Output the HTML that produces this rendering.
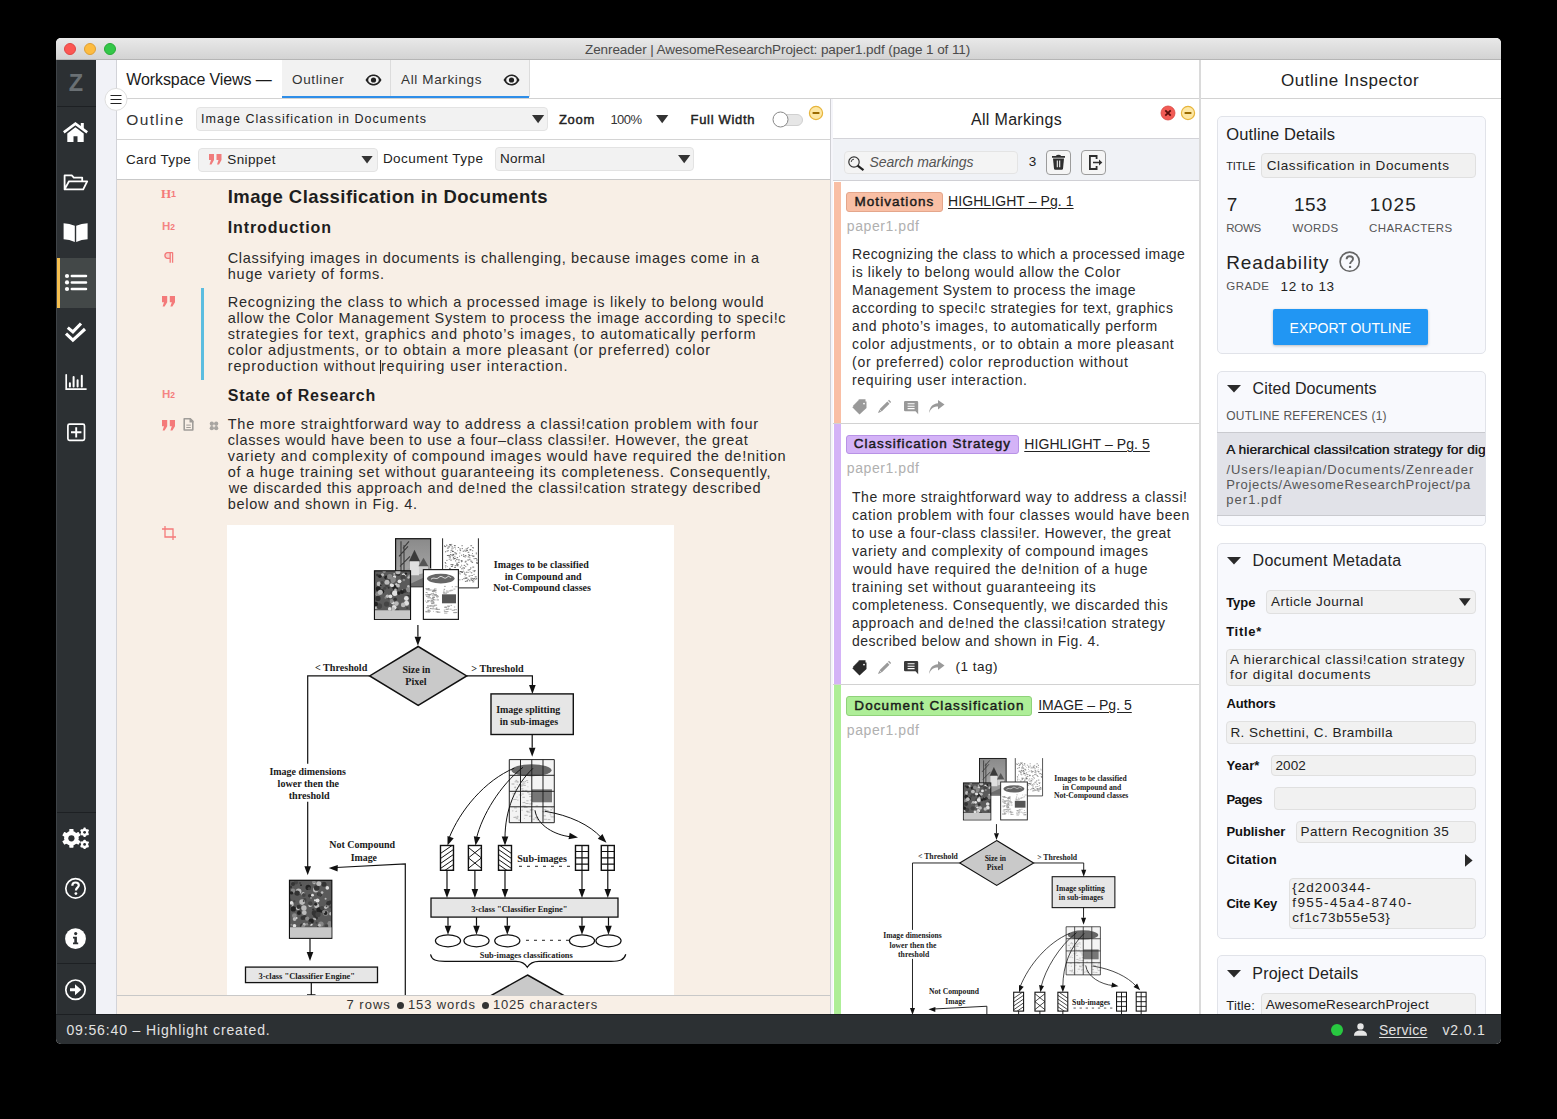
<!DOCTYPE html>
<html><head><meta charset="utf-8">
<style>
*{box-sizing:border-box;margin:0;padding:0}
html,body{width:1557px;height:1119px;background:#000;overflow:hidden;font-family:"Liberation Sans",sans-serif;color:#222}
.a{position:absolute;white-space:nowrap}
.b{position:absolute}
#win{position:absolute;left:56px;top:38px;width:1445px;height:1006px;background:#fff;border-radius:5px;overflow:hidden}
#pg{position:absolute;left:-56px;top:-38px;width:1557px;height:1119px}
svg{position:absolute;overflow:visible}
</style></head><body>
<div id="win"><div id="pg">
<div class="b" style="left:56px;top:38px;width:1445px;height:22px;background:linear-gradient(#e9e9e9,#d3d3d3);border-bottom:1px solid #b5b5b5;"></div>
<div class="b" style="left:64px;top:43px;width:12px;height:12px;background:#fc5753;border-radius:50%;border:1px solid #df4744;"></div>
<div class="b" style="left:84px;top:43px;width:12px;height:12px;background:#fdbc40;border-radius:50%;border:1px solid #de9f34;"></div>
<div class="b" style="left:104px;top:43px;width:12px;height:12px;background:#33c748;border-radius:50%;border:1px solid #27aa35;"></div>
<div class="a" style="left:585.00px;top:42.77px;font-size:13.5px;line-height:13.5px;letter-spacing:-0.083px;color:#4a4a4a;">Zenreader | AwesomeResearchProject: paper1.pdf (page 1 of 11)</div>
<div class="b" style="left:56px;top:60px;width:40px;height:954px;background:#2c3033;"></div>
<div class="b" style="left:56px;top:258px;width:40px;height:50px;background:#434848;"></div>
<div class="b" style="left:56px;top:258px;width:4px;height:50px;background:#f6bf4f;"></div>
<div class="b" style="left:56px;top:106px;width:40px;height:1px;background:#1d2023;"></div>
<div class="b" style="left:56px;top:812px;width:40px;height:1px;background:#1d2023;"></div>
<div class="b" style="left:56px;top:963px;width:40px;height:1px;background:#1d2023;"></div>
<div class="b" style="left:96px;top:60px;width:21px;height:954px;background:#f1f2f7;"></div>
<div class="b" style="left:116px;top:60px;width:1px;height:954px;background:#d2d3d8;"></div>
<div class="a" style="left:68.70px;top:72.30px;font-size:23.5px;line-height:23.5px;font-weight:bold;color:#6a7074;">Z</div>
<div class="b" style="left:56px;top:60px;width:1px;height:954px;background:#3f4448;"></div>
<svg style="left:0;top:0" width="1" height="1"><path d="M63.8 132.4L75.4 123.6L87.2 132.4" stroke="#ffffff" stroke-width="2.6" fill="none" stroke-linejoin="miter"/><path d="M80.8 123H83.8V130.5L80.8 128.3Z" fill="#ffffff"/><path d="M67.3 133.4L75.4 127.3L83.7 133.4V141.9H77.5V136.3H73.5V141.9H67.3Z" fill="#ffffff"/></svg>
<svg style="left:0;top:0" width="1" height="1"><path d="M64.6 189.4V175.4H71.8L73.8 177.6H82.2V181.2M64.6 189.4L69 181.3H87.2L83.2 189.4Z" stroke="#ffffff" stroke-width="1.8" fill="none" stroke-linejoin="round"/></svg>
<svg style="left:0;top:0" width="1" height="1"><path d="M63.6 223.3Q69.5 223.6 74.8 225.7V242Q69.5 239.6 63.6 239.3Z" fill="#ffffff"/><path d="M76.2 225.7Q81.5 223.6 87.6 223.3V239.3Q81.5 239.6 76.2 242Z" fill="#ffffff"/></svg>
<svg style="left:0;top:0" width="1" height="1"><g fill="#ffffff"><circle cx="67" cy="276" r="2.1"/><circle cx="67" cy="282.4" r="2.1"/><circle cx="67" cy="289" r="2.1"/></g><path d="M71.8 276H86M71.8 282.4H86M71.8 289H86" stroke="#ffffff" stroke-width="2.5" stroke-linecap="round"/></svg>
<svg style="left:0;top:0" width="1" height="1"><path d="M67.8 327.6L72.9 331.9L81 323.5M66 333.6L72.9 340.2L85 329" stroke="#ffffff" stroke-width="3.1" fill="none" stroke-linejoin="miter"/></svg>
<svg style="left:0;top:0" width="1" height="1"><path d="M66.2 374.8V389.1H86" stroke="#ffffff" stroke-width="1.7" fill="none" stroke-linecap="round"/><path d="M69.9 383.3V386.4M73.6 377V386.4M77.6 380.3V386.4M81.8 375.8V386.4" stroke="#ffffff" stroke-width="2" stroke-linecap="round"/></svg>
<svg style="left:0;top:0" width="1" height="1"><rect x="67.9" y="424.2" width="16.6" height="16.2" rx="1.6" stroke="#ffffff" stroke-width="1.7" fill="none"/><path d="M71 432.3H81.4M76.2 427.2V437.5" stroke="#ffffff" stroke-width="1.9"/></svg>
<svg style="left:0;top:0" width="1" height="1"><g fill="#ffffff"><rect x="69.30" y="828.90" width="4.2" height="9.4" transform="rotate(0.0 71.4 838.3)" rx="0.6"/><rect x="69.30" y="828.90" width="4.2" height="9.4" transform="rotate(60.0 71.4 838.3)" rx="0.6"/><rect x="69.30" y="828.90" width="4.2" height="9.4" transform="rotate(120.0 71.4 838.3)" rx="0.6"/><rect x="69.30" y="828.90" width="4.2" height="9.4" transform="rotate(180.0 71.4 838.3)" rx="0.6"/><rect x="69.30" y="828.90" width="4.2" height="9.4" transform="rotate(240.0 71.4 838.3)" rx="0.6"/><rect x="69.30" y="828.90" width="4.2" height="9.4" transform="rotate(300.0 71.4 838.3)" rx="0.6"/><circle cx="71.4" cy="838.3" r="7.3"/></g><circle cx="71.4" cy="838.3" r="3.1" fill="#2c3033"/><g fill="#ffffff"><rect x="83.50" y="827.60" width="2.2" height="4.7" transform="rotate(0.0 84.6 832.3)" rx="0.6"/><rect x="83.50" y="827.60" width="2.2" height="4.7" transform="rotate(60.0 84.6 832.3)" rx="0.6"/><rect x="83.50" y="827.60" width="2.2" height="4.7" transform="rotate(120.0 84.6 832.3)" rx="0.6"/><rect x="83.50" y="827.60" width="2.2" height="4.7" transform="rotate(180.0 84.6 832.3)" rx="0.6"/><rect x="83.50" y="827.60" width="2.2" height="4.7" transform="rotate(240.0 84.6 832.3)" rx="0.6"/><rect x="83.50" y="827.60" width="2.2" height="4.7" transform="rotate(300.0 84.6 832.3)" rx="0.6"/><circle cx="84.6" cy="832.3" r="3.6"/></g><circle cx="84.6" cy="832.3" r="1.4" fill="#2c3033"/><g fill="#ffffff"><rect x="83.50" y="839.70" width="2.2" height="4.7" transform="rotate(0.0 84.6 844.4)" rx="0.6"/><rect x="83.50" y="839.70" width="2.2" height="4.7" transform="rotate(60.0 84.6 844.4)" rx="0.6"/><rect x="83.50" y="839.70" width="2.2" height="4.7" transform="rotate(120.0 84.6 844.4)" rx="0.6"/><rect x="83.50" y="839.70" width="2.2" height="4.7" transform="rotate(180.0 84.6 844.4)" rx="0.6"/><rect x="83.50" y="839.70" width="2.2" height="4.7" transform="rotate(240.0 84.6 844.4)" rx="0.6"/><rect x="83.50" y="839.70" width="2.2" height="4.7" transform="rotate(300.0 84.6 844.4)" rx="0.6"/><circle cx="84.6" cy="844.4" r="3.6"/></g><circle cx="84.6" cy="844.4" r="1.4" fill="#2c3033"/></svg>
<svg style="left:0;top:0" width="1" height="1"><circle cx="75.5" cy="888.4" r="9.7" stroke="#ffffff" stroke-width="1.7" fill="none"/><path d="M72.3 885.7C72.3 883.5 73.7 882.5 75.6 882.5C77.5 882.5 78.8 883.6 78.8 885.3C78.8 887.5 76.2 887.7 76 890V890.6" stroke="#ffffff" stroke-width="2.2" fill="none"/><circle cx="75.9" cy="893.6" r="1.4" fill="#ffffff"/></svg>
<svg style="left:0;top:0" width="1" height="1"><circle cx="75.5" cy="938.7" r="10.4" fill="#ffffff"/><circle cx="75.7" cy="933.6" r="1.6" fill="#2c3033"/><path d="M73 936.8H76.9V942.6H78.2V944.3H73V942.6H74.3V938.5H73Z" fill="#2c3033"/></svg>
<svg style="left:0;top:0" width="1" height="1"><circle cx="75.5" cy="989.7" r="9.7" stroke="#ffffff" stroke-width="1.7" fill="none"/><path d="M70 988.2H75V984.2L81.2 989.7L75 995.2V991.2H70Z" fill="#ffffff"/></svg>
<div class="b" style="left:282px;top:60px;width:108px;height:37px;background:#f2f2f2;"></div>
<div class="b" style="left:390px;top:60px;width:139px;height:37px;background:#f2f2f2;"></div>
<div class="b" style="left:390px;top:60px;width:1px;height:37px;background:#dcdcdc;"></div>
<div class="b" style="left:529px;top:60px;width:1px;height:37px;background:#dcdcdc;"></div>
<div class="b" style="left:282px;top:96px;width:247px;height:2px;background:#2e8ee8;"></div>
<div class="b" style="left:117px;top:98px;width:1384px;height:1px;background:#d2d2d2;"></div>
<div class="a" style="left:126.30px;top:71.95px;font-size:16px;line-height:16px;letter-spacing:-0.094px;color:#1a1a1a;">Workspace Views —</div>
<div class="a" style="left:292.10px;top:72.77px;font-size:13.5px;line-height:13.5px;letter-spacing:0.614px;color:#333;">Outliner</div>
<div class="a" style="left:401.00px;top:72.77px;font-size:13.5px;line-height:13.5px;letter-spacing:0.636px;color:#333;">All Markings</div>
<svg style="left:364.5px;top:73px" width="17" height="14" viewBox="0 0 17 14"><path d="M0.5 7 C3 2.5 6 1.5 8.5 1.5 C11 1.5 14 2.5 16.5 7 C14 11.5 11 12.5 8.5 12.5 C6 12.5 3 11.5 0.5 7Z" fill="#222"/><ellipse cx="8.5" cy="7" rx="5.3" ry="3.9" fill="#f2f2f2"/><circle cx="8.5" cy="7" r="2.6" fill="#222"/></svg>
<svg style="left:502.5px;top:73px" width="17" height="14" viewBox="0 0 17 14"><path d="M0.5 7 C3 2.5 6 1.5 8.5 1.5 C11 1.5 14 2.5 16.5 7 C14 11.5 11 12.5 8.5 12.5 C6 12.5 3 11.5 0.5 7Z" fill="#222"/><ellipse cx="8.5" cy="7" rx="5.3" ry="3.9" fill="#f2f2f2"/><circle cx="8.5" cy="7" r="2.6" fill="#222"/></svg>
<svg style="left:104px;top:87px" width="25" height="25" viewBox="0 0 25 25"><circle cx="12" cy="12.4" r="11" fill="#fff" stroke="#dedede" stroke-width="1"/><path d="M6.5 8.5h11M6.5 12.5h11M6.5 16.5h11" stroke="#222" stroke-width="1.1"/></svg>
<div class="b" style="left:117px;top:139px;width:713px;height:1px;background:#d4d4d4;"></div>
<div class="b" style="left:117px;top:179px;width:713px;height:1px;background:#c9c9c9;"></div>
<div class="a" style="left:126.30px;top:111.88px;font-size:15.5px;line-height:15.5px;letter-spacing:1.333px;color:#333;">Outline</div>
<div class="b" style="left:196px;top:107px;width:352px;height:24px;background:#f2f2f2;border:1px solid #e3e3e3;border-radius:4px;"></div>
<div class="a" style="left:201.00px;top:113.12px;font-size:12.5px;line-height:12.5px;letter-spacing:1.041px;color:#222;">Image Classification in Documents</div>
<svg style="left:532px;top:115px" width="12.2" height="8.2" viewBox="0 0 12 8"><path d="M0 0H12L6 8Z" fill="#333"/></svg>
<div class="a" style="left:559.00px;top:112.79px;font-size:13px;line-height:13px;letter-spacing:0.667px;color:#222;-webkit-text-stroke:.45px #222;">Zoom</div>
<div class="a" style="left:610.40px;top:112.79px;font-size:13px;line-height:13px;letter-spacing:-0.500px;color:#333;">100%</div>
<svg style="left:655.6px;top:115px" width="12.4" height="8.2" viewBox="0 0 12 8"><path d="M0 0H12L6 8Z" fill="#333"/></svg>
<div class="a" style="left:690.60px;top:112.79px;font-size:13px;line-height:13px;letter-spacing:0.667px;color:#222;-webkit-text-stroke:.45px #222;">Full Width</div>
<div class="b" style="left:774px;top:114px;width:29px;height:12px;background:#e6e6e6;border-radius:6px;border:1px solid #d0d0d0;"></div>
<svg style="left:772px;top:111px" width="17" height="17" viewBox="0 0 17 17"><circle cx="8.5" cy="8.5" r="7.5" fill="#fff" stroke="#888" stroke-width="1"/></svg>
<svg style="left:808px;top:105px" width="16" height="16" viewBox="0 0 16 16"><circle cx="8" cy="8" r="6.6" fill="#fde7a4" stroke="#e7b53c" stroke-width="1.2"/><path d="M4.6 8h6.8" stroke="#9a6a00" stroke-width="1.8"/></svg>
<div class="a" style="left:126.00px;top:152.57px;font-size:13.5px;line-height:13.5px;letter-spacing:0.338px;color:#222;">Card Type</div>
<div class="b" style="left:198px;top:147.5px;width:179.5px;height:24px;background:#f2f2f2;border:1px solid #e3e3e3;border-radius:4px;"></div>
<svg style="left:208.6px;top:154px" width="13" height="10.5" viewBox="0 0 13 10.5"><path d="M0 0h5v6l-2.5 4.5h-2l1.5-4.5h-2z M7.5 0h5v6l-2.5 4.5h-2l1.5-4.5h-2z" fill="#f07c7c"/></svg>
<div class="a" style="left:227.30px;top:152.57px;font-size:13.5px;line-height:13.5px;letter-spacing:0.383px;color:#222;">Snippet</div>
<svg style="left:360.6px;top:155.5px" width="12.1" height="7.5" viewBox="0 0 12 8"><path d="M0 0H12L6 8Z" fill="#333"/></svg>
<div class="a" style="left:382.90px;top:152.37px;font-size:13.5px;line-height:13.5px;letter-spacing:0.475px;color:#222;">Document Type</div>
<div class="b" style="left:495px;top:147.3px;width:199.3px;height:24.2px;background:#f2f2f2;border:1px solid #e3e3e3;border-radius:4px;"></div>
<div class="a" style="left:500.00px;top:152.37px;font-size:13.5px;line-height:13.5px;letter-spacing:0.280px;color:#222;">Normal</div>
<svg style="left:677.8px;top:155px" width="12.4" height="8.2" viewBox="0 0 12 8"><path d="M0 0H12L6 8Z" fill="#333"/></svg>
<div class="b" style="left:117px;top:180px;width:712.5px;height:815px;background:#f8efe6;"></div>
<div class="b" style="left:117px;top:995px;width:712.5px;height:1px;background:#c8c8c8;"></div>
<div class="b" style="left:117px;top:996px;width:712.5px;height:18px;background:#f8efe6;"></div>
<div class="b" style="left:829.5px;top:99px;width:1.5px;height:915px;background:#cfcfd4;"></div>
<div class="b" style="left:831px;top:99px;width:2px;height:915px;background:#f5f5fa;"></div>
<div class="a" style="left:161.00px;top:187.01px;font-size:13px;line-height:13px;font-family:'Liberation Serif',serif;font-weight:bold;color:#f47a7a;">H</div>
<div class="a" style="left:171.00px;top:190.28px;font-size:9px;line-height:9px;font-weight:bold;color:#f47a7a;">1</div>
<div class="a" style="left:162.00px;top:220.96px;font-size:11.5px;line-height:11.5px;font-weight:bold;color:#f47a7a;opacity:.9;">H</div>
<div class="a" style="left:170.30px;top:222.80px;font-size:8.5px;line-height:8.5px;font-weight:bold;color:#f47a7a;">2</div>
<svg style="left:163.4px;top:252.2px" width="10.2" height="10.8" viewBox="0 0 10.2 10.8"><path d="M7.2 0.6V10.8M9.6 0.6V10.8M9.8 0.6H4.2A3 3 0 0 0 4.2 6.4H7.2" stroke="#f47a7a" stroke-width="1.3" fill="none"/><path d="M4.2 0.6A2.9 2.9 0 0 0 4.2 6.4H7.2V0.6Z" fill="#f47a7a" opacity=".25"/></svg>
<svg style="left:162.2px;top:296.4px" width="13" height="10.5" viewBox="0 0 13 10.5"><path d="M0 0h5.2v6.2l-2.6 4.3h-2l1.4-4.3h-2z M7.8 0h5.2v6.2l-2.6 4.3h-2l1.4-4.3h-2z" fill="#f47a7a"/></svg>
<div class="b" style="left:201px;top:288.2px;width:3px;height:91.4px;background:#5bbde0;"></div>
<div class="a" style="left:227.70px;top:187.84px;font-size:18.5px;line-height:18.5px;letter-spacing:0.425px;font-weight:bold;color:#1e1e1e;">Image Classification in Documents</div>
<div class="a" style="left:227.70px;top:220.35px;font-size:16px;line-height:16px;letter-spacing:0.909px;font-weight:bold;color:#1e1e1e;">Introduction</div>
<div class="a" style="left:227.70px;top:250.82px;font-size:14.5px;line-height:14.5px;letter-spacing:0.673px;color:#2a2a2a;">Classifying images in documents is challenging, because images come in a</div>
<div class="a" style="left:227.70px;top:266.82px;font-size:14.5px;line-height:14.5px;letter-spacing:0.810px;color:#2a2a2a;">huge variety of forms.</div>
<div class="a" style="left:227.70px;top:295.02px;font-size:14.5px;line-height:14.5px;letter-spacing:0.748px;color:#2a2a2a;">Recognizing the class to which a processed image is likely to belong would</div>
<div class="a" style="left:227.70px;top:311.02px;font-size:14.5px;line-height:14.5px;letter-spacing:0.678px;color:#2a2a2a;">allow the Color Management System to process the image according to speci!c</div>
<div class="a" style="left:227.70px;top:327.02px;font-size:14.5px;line-height:14.5px;letter-spacing:0.844px;color:#2a2a2a;">strategies for text, graphics and photo’s images, to automatically perform</div>
<div class="a" style="left:227.70px;top:343.02px;font-size:14.5px;line-height:14.5px;letter-spacing:0.825px;color:#2a2a2a;">color adjustments, or to obtain a more pleasant (or preferred) color</div>
<div class="a" style="left:227.70px;top:359.02px;font-size:14.5px;line-height:14.5px;letter-spacing:0.885px;color:#2a2a2a;">reproduction without requiring user interaction.</div>
<div class="b" style="left:380px;top:360px;width:1px;height:14px;background:#222;"></div>
<div class="a" style="left:162.00px;top:388.96px;font-size:11.5px;line-height:11.5px;font-weight:bold;color:#f47a7a;opacity:.9;">H</div>
<div class="a" style="left:170.30px;top:390.80px;font-size:8.5px;line-height:8.5px;font-weight:bold;color:#f47a7a;">2</div>
<div class="a" style="left:227.70px;top:387.75px;font-size:16px;line-height:16px;letter-spacing:0.776px;font-weight:bold;color:#1e1e1e;">State of Research</div>
<svg style="left:162.2px;top:419.5px" width="13" height="10.5" viewBox="0 0 13 10.5"><path d="M0 0h5.2v6.2l-2.6 4.3h-2l1.4-4.3h-2z M7.8 0h5.2v6.2l-2.6 4.3h-2l1.4-4.3h-2z" fill="#f47a7a"/></svg>
<svg style="left:0;top:0" width="1" height="1"><path d="M184.2 418.7H190.2L192.8 421.4V430H184.2Z" fill="none" stroke="#a09d99" stroke-width="1.6" stroke-linejoin="round"/><path d="M189.5 418.2H190.6L193.4 421V422.5H189.5Z" fill="#a09d99"/><path d="M186.3 425.1H190.8M186.3 427.5H190.8" stroke="#a09d99" stroke-width="1"/></svg>
<svg style="left:0;top:0" width="1" height="1"><path d="M211.8 423.7H216.2V428.2H211.8Z" fill="none" stroke="#c0bcb8" stroke-width="1.3"/><g fill="#a8a5a1"><circle cx="211.8" cy="423.7" r="2.1"/><circle cx="216.2" cy="423.7" r="2.1"/><circle cx="211.8" cy="428.2" r="2.1"/><circle cx="216.2" cy="428.2" r="2.1"/></g></svg>
<div class="a" style="left:227.70px;top:417.42px;font-size:14.5px;line-height:14.5px;letter-spacing:0.786px;color:#2a2a2a;">The more straightforward way to address a classi!cation problem with four</div>
<div class="a" style="left:227.70px;top:433.42px;font-size:14.5px;line-height:14.5px;letter-spacing:0.640px;color:#2a2a2a;">classes would have been to use a four–class classi!er. However, the great</div>
<div class="a" style="left:227.70px;top:449.42px;font-size:14.5px;line-height:14.5px;letter-spacing:0.786px;color:#2a2a2a;">variety and complexity of compound images would have required the de!nition</div>
<div class="a" style="left:227.70px;top:465.42px;font-size:14.5px;line-height:14.5px;letter-spacing:0.772px;color:#2a2a2a;">of a huge training set without guaranteeing its completeness. Consequently,</div>
<div class="a" style="left:228.70px;top:481.42px;font-size:14.5px;line-height:14.5px;letter-spacing:0.673px;color:#2a2a2a;">we discarded this approach and de!ned the classi!cation strategy described</div>
<div class="a" style="left:227.70px;top:497.42px;font-size:14.5px;line-height:14.5px;letter-spacing:0.708px;color:#2a2a2a;">below and shown in Fig. 4.</div>
<svg style="left:161.5px;top:525.5px" width="14" height="14" viewBox="0 0 14 14"><path d="M3 0V11H14M0 3H11V14" fill="none" stroke="#f47a7a" stroke-width="1.3"/></svg>
<div class="a" style="left:346.50px;top:998.49px;font-size:13px;line-height:13px;letter-spacing:1.000px;color:#333;">7 rows</div>
<div class="b" style="left:396.5px;top:1001.5px;width:7px;height:7px;background:#333;border-radius:50%;"></div>
<div class="a" style="left:408.00px;top:998.49px;font-size:13px;line-height:13px;letter-spacing:0.875px;color:#333;">153 words</div>
<div class="b" style="left:481.5px;top:1001.5px;width:7px;height:7px;background:#333;border-radius:50%;"></div>
<div class="a" style="left:493.00px;top:998.49px;font-size:13px;line-height:13px;letter-spacing:0.786px;color:#333;">1025 characters</div>
<svg style="left:0;top:0;overflow:hidden" width="0" height="0"><defs><g id="fig"><rect x="227" y="524.7" width="447.2" height="600" fill="#fff"/><defs><linearGradient id="sky" x1="0" y1="0" x2="0" y2="1"><stop offset="0" stop-color="#8a8a8a"/><stop offset="1" stop-color="#b0b0b0"/></linearGradient></defs><rect x="395.6" y="538.4" width="35" height="48" fill="url(#sky)" stroke="#111" stroke-width="1.2"/><path d="M396 586V574L413 566L431 568V586Z" fill="#999"/><path d="M405 586L431 574V586Z" fill="#6d6d6d"/><path d="M410 575V560L414.5 551L419 560V575Z" fill="#e0e0e0"/><path d="M409 561L414.5 549.5L420 561Z" fill="#3a3a3a"/><path d="M419 574V565L423.5 559L428 565V572Z" fill="#cfcfcf"/><path d="M418.5 566L423.5 557.5L428.5 566Z" fill="#555"/><path d="M401 586V541M404 586V545M399 556L408 546M400 566L410 556M403 548L409 541" stroke="#3a3a3a" stroke-width="1.1" fill="none"/><rect x="442.3" y="538.4" width="36.4" height="49" fill="#fff"/><path d="M442.6 538V587.6H478.4V538" stroke="#222" stroke-width="1" fill="none"/><path d="M451.9 564.7h1.1M463.9 567.8h0.6M444.4 575.8h0.9M451.7 581.8h1.2M471.6 562.1h1.5M449.0 568.1h1.8M461.3 572.2h1.5M446.1 572.8h1.4M453.9 545.2h1.8M459.6 571.3h1.8M467.6 579.0h1.1M470.4 560.9h1.9M473.0 547.7h0.7M451.2 580.7h1.2M464.7 555.4h1.3M456.7 557.3h1.4M463.3 578.4h1.5M474.7 576.5h2.0M466.2 550.2h1.8M475.8 578.4h1.4M467.6 552.0h1.7M462.9 554.8h0.6M472.2 581.6h0.6M470.4 559.6h0.7M453.7 573.2h1.8M445.5 567.4h0.6M467.7 556.6h1.8M476.4 563.2h2.0M454.2 546.9h1.4M445.0 551.5h1.1M464.1 549.9h0.6M472.6 555.9h1.9M473.6 558.4h1.2M461.2 568.5h1.4M462.5 567.6h1.9M460.7 560.4h1.6M451.8 555.4h2.0M461.2 564.8h0.5M457.7 566.0h0.5M464.3 568.0h0.6M464.7 561.7h1.5M455.6 570.9h1.6M444.7 546.3h1.5M475.8 553.5h1.2M463.6 556.2h1.0M454.3 558.0h1.4M453.9 558.3h1.7M444.9 565.6h1.6M454.2 552.5h1.7M451.9 551.1h1.2M467.0 547.9h1.0M455.0 575.7h1.2M472.2 550.4h1.0M465.5 577.6h1.2M451.4 548.6h1.3M450.3 574.7h1.8M450.1 554.6h1.7M465.2 574.6h1.0M448.3 555.1h1.7M452.9 557.2h1.1M457.9 559.6h1.9M449.1 544.2h1.9M473.0 581.5h1.2M475.4 579.2h0.8M468.6 575.8h1.5M461.1 555.0h1.0M451.5 546.6h1.4M453.5 574.8h0.6M473.8 570.4h1.9M473.6 578.2h1.4M444.4 572.3h0.8M453.9 569.2h1.3M457.7 579.7h1.4M455.3 553.6h1.8M459.7 573.7h1.0M450.5 564.3h1.7M449.7 574.1h1.9M470.6 575.3h0.5M464.7 576.8h0.6M453.0 554.2h1.3M458.0 562.0h1.7M444.1 546.1h0.7M448.1 546.6h2.0M472.2 547.3h1.3M454.4 556.0h1.0M465.3 566.3h1.0M450.3 556.5h0.7M462.3 571.2h1.1M446.6 550.8h1.1M463.9 573.7h1.1M470.4 567.7h1.1M456.3 562.9h1.6M457.9 570.4h1.2M452.1 564.4h1.5M446.4 560.1h1.1M473.0 579.6h1.1M473.6 574.1h0.9M459.3 548.7h1.7M465.9 577.7h1.7M466.0 571.9h1.3M447.4 566.3h0.5M448.7 573.4h0.6M447.0 547.8h1.8M449.9 544.9h1.8M448.0 576.1h1.5M471.6 580.2h1.4M470.4 545.4h1.7M460.9 571.2h0.7M468.7 579.5h0.6M454.7 565.4h1.7M452.0 550.8h0.9M464.3 572.6h1.1M456.1 559.1h1.0M457.8 547.2h1.3M476.1 559.7h1.6M449.3 570.3h1.6M466.2 563.6h1.2M465.2 578.1h0.7M447.2 572.4h1.9M461.1 560.8h1.6M450.1 554.2h0.8M463.3 556.0h0.8M466.8 580.2h0.9M467.3 559.7h1.8M463.3 554.2h0.8M444.8 562.2h1.1M449.7 557.7h1.0M469.5 549.5h2.0M459.8 566.8h1.2M471.5 575.2h1.3M459.9 571.4h1.8M457.2 571.9h1.9M459.4 552.7h0.9M467.7 569.7h1.9M472.2 553.2h0.8M452.5 551.1h1.6M472.3 578.2h0.9M472.5 555.9h1.1M468.1 547.3h0.6M471.5 555.1h1.0M463.1 569.7h0.5M455.0 560.6h1.2M450.9 566.2h1.9M456.9 564.7h0.7M453.1 569.3h0.7M473.3 578.5h0.6M475.1 558.2h1.7M469.0 555.2h1.5M465.6 574.6h0.9M468.9 580.5h1.5M461.7 548.3h1.2M455.6 571.3h1.5M462.7 550.9h1.5M464.8 550.8h1.8M465.6 548.7h1.9M448.7 556.6h1.6M463.7 565.1h1.5M459.1 555.9h0.8M446.3 571.2h1.6M461.9 572.1h1.0M452.8 558.6h1.8M445.4 563.2h0.9M469.4 557.5h1.0M457.3 564.6h1.7M455.6 576.2h0.7M452.9 547.8h0.7M469.7 571.6h0.8M450.2 559.8h1.6M470.9 572.5h1.4M448.8 559.1h0.8M461.4 565.6h0.8M452.3 573.7h0.5M470.5 577.9h1.9M456.6 565.0h1.4M464.9 581.1h1.5M453.9 576.7h1.2M463.8 571.6h0.5M469.4 569.2h1.2M461.3 561.5h0.8M461.5 545.4h1.3M465.3 560.9h1.3M475.6 577.9h0.7M470.1 567.7h0.6M455.9 552.9h0.6M461.8 579.3h1.0M472.7 570.4h0.7M472.3 566.8h1.9M467.6 572.1h1.0M470.6 579.4h1.8M458.4 572.8h1.2M447.6 545.6h0.6M450.6 550.1h1.2M467.1 564.4h1.1M465.4 555.6h1.2M469.0 559.3h0.8M473.7 571.3h1.1M456.2 564.1h1.4M451.4 544.1h0.8M469.8 549.5h1.2M450.4 552.0h0.8M457.3 550.4h0.5M447.6 550.4h1.2M446.0 544.9h1.2M457.5 570.7h0.6M457.3 559.1h0.5M475.9 552.3h0.6M459.7 550.3h1.4M455.4 548.7h0.6M468.0 554.5h1.7M459.4 579.5h1.0M452.2 554.1h1.7M464.8 557.1h0.6M466.5 580.8h1.4M444.1 545.2h0.6M449.6 545.4h0.6M465.6 578.2h0.8M476.1 562.1h1.7M474.3 579.7h0.6M454.1 567.1h1.9M446.9 555.2h1.8" stroke="#555" stroke-width=".8" fill="none"/><rect x="374.5" y="570.5" width="36" height="48.6" fill="#5a5a5a" stroke="#111" stroke-width="1.2"/><clipPath id="bc7"><rect x="375" y="571" width="35" height="41"/></clipPath><g clip-path="url(#bc7)"><circle cx="386.3" cy="577.2" r="2.1" fill="#222"/><circle cx="403.7" cy="574.9" r="2.0" fill="#e0e0e0"/><circle cx="382.5" cy="574.5" r="1.6" fill="#bbb"/><circle cx="378.2" cy="588.4" r="2.5" fill="#222"/><circle cx="408.2" cy="596.9" r="2.0" fill="#222"/><circle cx="395.2" cy="587.3" r="2.8" fill="#222"/><circle cx="394.5" cy="576.5" r="1.6" fill="#e0e0e0"/><circle cx="379.1" cy="583.6" r="2.4" fill="#bbb"/><circle cx="378.6" cy="594.4" r="1.2" fill="#222"/><circle cx="394.2" cy="573.6" r="0.9" fill="#bbb"/><circle cx="392.4" cy="592.8" r="2.4" fill="#444"/><circle cx="395.5" cy="589.6" r="1.4" fill="#bbb"/><circle cx="399.5" cy="581.0" r="1.9" fill="#e0e0e0"/><circle cx="392.3" cy="585.1" r="1.7" fill="#e0e0e0"/><circle cx="409.3" cy="575.8" r="1.6" fill="#888"/><circle cx="380.3" cy="591.0" r="0.9" fill="#333"/><circle cx="377.7" cy="593.9" r="2.4" fill="#888"/><circle cx="386.9" cy="585.4" r="1.8" fill="#444"/><circle cx="377.4" cy="574.8" r="1.3" fill="#333"/><circle cx="398.2" cy="573.5" r="2.2" fill="#333"/><circle cx="395.2" cy="598.9" r="1.7" fill="#333"/><circle cx="388.5" cy="598.4" r="0.8" fill="#444"/><circle cx="387.4" cy="596.0" r="1.8" fill="#bbb"/><circle cx="401.9" cy="576.3" r="1.3" fill="#444"/><circle cx="407.1" cy="591.4" r="1.1" fill="#444"/><circle cx="394.2" cy="607.2" r="2.4" fill="#e0e0e0"/><circle cx="384.7" cy="588.0" r="1.5" fill="#444"/><circle cx="408.5" cy="577.2" r="1.2" fill="#bbb"/><circle cx="398.0" cy="571.5" r="2.5" fill="#bbb"/><circle cx="384.2" cy="571.2" r="1.6" fill="#888"/><circle cx="396.3" cy="584.1" r="1.1" fill="#e0e0e0"/><circle cx="408.3" cy="597.9" r="2.3" fill="#444"/><circle cx="406.5" cy="603.0" r="2.5" fill="#e0e0e0"/><circle cx="388.7" cy="587.4" r="1.0" fill="#333"/><circle cx="389.0" cy="578.8" r="2.8" fill="#444"/><circle cx="380.7" cy="584.9" r="0.9" fill="#222"/><circle cx="394.8" cy="593.0" r="2.7" fill="#e0e0e0"/><circle cx="375.9" cy="606.8" r="2.0" fill="#bbb"/><circle cx="397.2" cy="610.2" r="2.0" fill="#444"/><circle cx="379.3" cy="605.8" r="2.8" fill="#444"/><circle cx="391.8" cy="583.8" r="1.1" fill="#333"/><circle cx="387.0" cy="581.9" r="2.5" fill="#bbb"/><circle cx="393.1" cy="579.4" r="2.7" fill="#888"/><circle cx="380.1" cy="593.3" r="0.9" fill="#e0e0e0"/><circle cx="385.4" cy="597.4" r="1.0" fill="#888"/><circle cx="393.1" cy="608.2" r="1.5" fill="#bbb"/><circle cx="393.6" cy="602.9" r="1.5" fill="#bbb"/><circle cx="396.5" cy="603.3" r="2.3" fill="#bbb"/><circle cx="403.2" cy="604.6" r="2.3" fill="#bbb"/><circle cx="382.0" cy="591.2" r="2.3" fill="#222"/><circle cx="402.7" cy="590.4" r="1.2" fill="#e0e0e0"/><circle cx="408.5" cy="589.3" r="2.7" fill="#888"/><circle cx="408.4" cy="586.0" r="1.2" fill="#bbb"/><circle cx="391.5" cy="584.8" r="1.8" fill="#e0e0e0"/><circle cx="404.4" cy="590.7" r="2.1" fill="#333"/><circle cx="378.0" cy="598.1" r="2.6" fill="#333"/><circle cx="401.3" cy="590.6" r="1.2" fill="#333"/><circle cx="386.6" cy="603.8" r="2.7" fill="#444"/><circle cx="391.2" cy="601.5" r="1.0" fill="#bbb"/><circle cx="381.0" cy="576.2" r="1.1" fill="#444"/><circle cx="403.2" cy="577.0" r="2.5" fill="#444"/><circle cx="398.0" cy="585.4" r="1.9" fill="#bbb"/><circle cx="375.7" cy="603.8" r="2.3" fill="#222"/><circle cx="393.4" cy="609.3" r="1.7" fill="#bbb"/><circle cx="403.9" cy="579.7" r="1.3" fill="#888"/><circle cx="392.5" cy="602.3" r="1.5" fill="#e0e0e0"/><circle cx="389.7" cy="576.4" r="2.6" fill="#888"/><circle cx="406.4" cy="598.2" r="2.4" fill="#e0e0e0"/><circle cx="389.7" cy="608.6" r="1.8" fill="#e0e0e0"/><circle cx="380.3" cy="591.9" r="2.5" fill="#bbb"/><circle cx="396.3" cy="602.8" r="1.1" fill="#bbb"/><circle cx="391.6" cy="600.7" r="1.9" fill="#888"/><circle cx="398.9" cy="592.8" r="1.8" fill="#222"/><circle cx="405.9" cy="573.3" r="1.2" fill="#222"/><circle cx="402.0" cy="591.8" r="1.9" fill="#222"/><circle cx="390.5" cy="596.1" r="1.8" fill="#e0e0e0"/><circle cx="382.0" cy="582.4" r="1.8" fill="#444"/><circle cx="392.8" cy="581.2" r="1.8" fill="#888"/><circle cx="407.3" cy="607.6" r="1.2" fill="#444"/><circle cx="379.8" cy="576.0" r="1.7" fill="#222"/></g><rect x="375" y="610" width="35" height="8.8" fill="#c8c8c8"/><rect x="423.4" y="569.3" width="35" height="49.8" fill="#fff" stroke="#222" stroke-width="1.2"/><ellipse cx="440.8" cy="578.3" rx="13.8" ry="4.8" fill="#666"/><path d="M431 579C434 576 436 580 439 577S444 580 447 577S450 579 451 577" stroke="#e8e8e8" stroke-width=".9" fill="none"/><path d="M430.4 601.4h3.7M430.6 600.2h2.6M427.2 600.3h2.7M434.5 590.3h1.6M426.1 607.4h2.9M425.5 611.6h3.9M432.8 602.8h1.1M425.2 600.7h0.7M427.3 593.8h0.6M430.6 598.6h3.4M431.2 603.4h2.2M432.9 599.0h1.5M437.0 611.9h3.4M433.5 595.6h1.3M428.5 589.7h3.2M429.8 608.3h1.9M436.5 608.3h0.5M427.5 609.8h2.1M436.8 597.5h0.8M432.6 606.7h1.4M426.0 596.0h3.9M434.1 590.8h1.4M426.2 589.4h3.3M427.1 601.4h2.1M427.3 605.6h1.0M432.7 590.8h2.0M427.6 594.5h3.9M434.6 595.3h3.6M427.5 597.5h3.5M432.7 590.4h4.0M427.6 594.2h3.2M428.9 595.1h0.8M426.1 602.0h1.4M432.2 596.9h2.1M436.5 599.6h2.5M435.4 592.4h1.0M435.9 607.6h1.4M427.3 605.7h3.8M427.4 610.8h3.6M432.2 598.1h0.9M425.5 611.1h1.3M433.5 594.2h3.4M432.2 595.0h1.1M433.6 589.7h1.3M431.7 608.5h2.7M428.4 610.0h1.2M425.2 594.5h2.1M425.7 592.2h1.8M431.9 591.2h1.8M435.7 611.5h2.8M433.3 602.0h1.0M425.4 588.4h3.7M433.4 611.1h0.6M432.6 599.6h3.1M428.8 612.0h0.8M431.6 605.7h3.7M433.8 604.9h3.3M436.0 596.4h2.9M435.8 608.9h2.0M434.5 608.7h2.5M432.5 597.2h2.5M432.3 589.9h2.7M436.9 609.1h3.0M429.7 605.6h2.5M430.3 608.1h0.8M434.0 588.7h2.6M430.8 593.5h2.9M431.0 602.7h3.7M428.1 588.3h1.6M433.1 592.9h1.1" stroke="#888" stroke-width=".8" fill="none"/><rect x="442" y="594" width="14" height="9" fill="#555"/><path d="M448.6 590.6h2.8M444.0 586.1h1.8M445.8 591.7h2.9M450.4 589.9h2.8M444.0 589.1h1.1M454.7 586.4h3.4M443.0 590.8h1.7M447.7 591.9h0.6M442.9 592.4h2.3M443.3 592.9h3.8M443.6 589.0h1.0M446.4 590.4h1.1M451.8 586.4h1.1M453.4 588.8h2.0" stroke="#999" stroke-width=".8" fill="none"/><path d="M445.6 611.2h2.9M453.9 606.7h1.3M444.1 607.0h3.1M443.8 609.8h1.2M446.1 608.9h3.4M450.5 605.1h1.5M444.1 612.8h3.3M453.3 612.4h3.1M455.3 612.1h1.4M453.9 609.4h3.1M449.9 608.9h1.8M448.0 607.8h0.9M453.5 612.2h3.9M451.7 610.0h3.1M443.9 611.1h2.1M444.5 606.8h2.3M445.5 609.1h2.6M447.5 606.2h2.2M445.3 607.1h1.2M447.1 605.7h2.8" stroke="#999" stroke-width=".8" fill="none"/><path d="M417.9 624.6V636.5" stroke="#111" stroke-width="1.2" fill="none"/><path d="M414.59999999999997 636.5L421.2 636.5L417.9 645.5Z" fill="#111"/><path d="M418.2 646.2L466.7 675.6L418.2 705L369.7 675.6Z" fill="#c9c9c9" stroke="#111" stroke-width="1.5"/><path d="M369.7 675.6H307.7V763.4M307.7 801.4V868" stroke="#111" stroke-width="1.2" fill="none"/><path d="M0 0L-9 -3.3L-9 3.3Z" fill="#111" transform="translate(307.7 875.0) rotate(90.0)"/><path d="M466.7 675.6H532.4V687" stroke="#111" stroke-width="1.2" fill="none"/><path d="M0 0L-9 -3.3L-9 3.3Z" fill="#111" transform="translate(532.4 693.6) rotate(90.0)"/><rect x="491" y="693.6" width="82.3" height="40.6" fill="#e6e6e6" stroke="#111" stroke-width="1.4"/><path d="M532.2 734.2V747.5" stroke="#111" stroke-width="1.2" fill="none"/><path d="M528.9000000000001 747.5L535.5 747.5L532.2 756.5Z" fill="#111"/><rect x="509.3" y="759.3" width="45" height="63.1" fill="#f4f4f4"/><ellipse cx="531.5" cy="770" rx="20" ry="6" fill="#666"/><path d="M514.1 807.6h2.7M520.1 788.6h3.3M526.3 800.5h2.3M515.5 780.1h1.8M522.1 782.8h3.3M515.4 789.3h0.6M530.0 809.5h3.6M522.7 781.4h1.7M520.5 784.6h3.8M518.0 786.2h3.4M513.4 817.1h2.1M521.5 793.7h2.2M514.6 781.5h3.5M515.5 811.2h1.2M529.4 815.8h3.1M525.5 803.2h3.1M513.3 799.1h3.4M514.8 816.9h3.6M518.8 794.6h2.1M518.3 819.8h1.9M511.5 783.7h3.0M529.9 799.8h2.2M521.5 809.9h1.3M522.6 802.3h2.7M514.4 786.8h1.7M528.6 793.9h2.6M516.8 784.1h0.7M526.5 811.1h1.8M524.0 807.0h3.6M529.2 796.3h4.0M529.3 803.6h3.6M520.3 795.0h1.4M527.6 786.5h0.7M526.3 811.0h2.2M526.9 782.1h1.4M516.5 796.8h1.1M512.3 793.5h3.6M529.7 809.8h2.2M515.8 818.4h2.3M524.8 781.1h1.2M526.9 811.8h3.6M522.4 797.0h2.5M527.1 792.3h2.4M516.2 810.7h0.5M524.0 818.2h0.6M522.3 805.8h3.5M522.1 790.3h1.9M529.2 816.2h1.0M512.8 783.8h0.6M519.5 785.6h3.5M523.5 785.1h2.4M517.2 799.8h1.3M514.2 787.4h1.8M524.5 802.0h0.7M524.5 815.0h3.2M526.0 780.3h2.1M512.2 810.6h1.1M524.5 790.1h2.9M517.0 781.7h1.9M516.9 816.0h1.5" stroke="#aaa" stroke-width=".8" fill="none"/><rect x="532" y="789" width="20" height="13" fill="#777"/><path d="M551.2 807.1h0.6M552.0 807.8h0.9M545.0 810.2h3.6M536.6 819.4h1.6M544.0 819.0h2.9M550.5 815.6h0.7M549.6 813.8h1.6M535.8 817.7h2.5M550.8 816.6h3.9M543.3 815.5h2.6M537.2 819.4h1.6M547.6 819.3h2.8M534.8 817.4h2.8M535.7 805.7h2.4M532.6 818.9h2.3M542.3 811.1h2.8M550.3 809.6h1.8M543.7 809.5h2.6M542.9 811.5h2.9M542.6 806.3h4.0" stroke="#aaa" stroke-width=".8" fill="none"/><path d="M509.3 759.3H554.3V822.4H509.3Z M520.5 759.3V822.4 M531.8 759.3V822.4 M543 759.3V822.4 M509.3 775H554.3 M509.3 791H554.3 M509.3 806.5H554.3" stroke="#222" stroke-width="1" fill="none"/><path d="M514.3 767.8C485 780 460 810 449 838" stroke="#111" stroke-width="1" fill="none"/><path d="M0 0L-9 -3.3L-9 3.3Z" fill="#111" transform="translate(447.5 845.3) rotate(110.0)"/><path d="M523 767C500 785 482 815 476.5 838" stroke="#111" stroke-width="1" fill="none"/><path d="M0 0L-9 -3.3L-9 3.3Z" fill="#111" transform="translate(475.5 845.3) rotate(100.0)"/><path d="M533 768C515 785 505 810 505 838" stroke="#111" stroke-width="1" fill="none"/><path d="M0 0L-9 -3.3L-9 3.3Z" fill="#111" transform="translate(505.0 845.3) rotate(90.0)"/><path d="M535 810C537 825 555 835 571 836.5" stroke="#111" stroke-width="1" fill="none"/><path d="M0 0L-9 -3.3L-9 3.3Z" fill="#111" transform="translate(578.0 837.3) rotate(10.0)"/><path d="M545 811C570 815 590 825 601 837" stroke="#111" stroke-width="1" fill="none"/><path d="M0 0L-9 -3.3L-9 3.3Z" fill="#111" transform="translate(606.5 842.5) rotate(45.0)"/><rect x="440.5" y="845.2" width="13" height="24.8" fill="#fff" stroke="#111" stroke-width="1.4"/><clipPath id="hc447"><rect x="440.5" y="845.2" width="13" height="24.8"/></clipPath><path d="M440.5 853.2L453.5 844.2M440.5 858.2L453.5 849.2M440.5 863.2L453.5 854.2M440.5 868.2L453.5 859.2M440.5 873.2L453.5 864.2M440.5 878.2L453.5 869.2" stroke="#111" stroke-width="1" clip-path="url(#hc447)"/><path d="M447 870V888.8" stroke="#111" stroke-width="1.2" fill="none"/><path d="M443.7 888.8L450.3 888.8L447 897.8Z" fill="#111"/><rect x="468.4" y="845.2" width="13" height="24.8" fill="#fff" stroke="#111" stroke-width="1.4"/><path d="M468.4 847.2L481.4 857.6L468.4 868.0M481.4 847.2L468.4 857.6L481.4 868.0" stroke="#111" stroke-width="1" fill="none"/><path d="M474.9 870V888.8" stroke="#111" stroke-width="1.2" fill="none"/><path d="M471.59999999999997 888.8L478.2 888.8L474.9 897.8Z" fill="#111"/><rect x="498.5" y="845.2" width="13" height="24.8" fill="#fff" stroke="#111" stroke-width="1.4"/><clipPath id="hc505"><rect x="498.5" y="845.2" width="13" height="24.8"/></clipPath><path d="M498.5 844.2L511.5 853.2M498.5 849.2L511.5 858.2M498.5 854.2L511.5 863.2M498.5 859.2L511.5 868.2M498.5 864.2L511.5 873.2M498.5 869.2L511.5 878.2" stroke="#111" stroke-width="1" clip-path="url(#hc505)"/><path d="M505 870V888.8" stroke="#111" stroke-width="1.2" fill="none"/><path d="M501.7 888.8L508.3 888.8L505 897.8Z" fill="#111"/><rect x="575.5" y="845.2" width="13" height="24.8" fill="#fff" stroke="#111" stroke-width="1.4"/><path d="M582.0 845.2V870.0M575.5 851.2H588.5M575.5 857.6H588.5M575.5 863.8000000000001H588.5" stroke="#111" stroke-width="1.2" fill="none"/><path d="M582 870V888.8" stroke="#111" stroke-width="1.2" fill="none"/><path d="M578.7 888.8L585.3 888.8L582 897.8Z" fill="#111"/><rect x="601.3" y="845.2" width="13" height="24.8" fill="#fff" stroke="#111" stroke-width="1.4"/><path d="M607.8 845.2V870.0M601.3 851.2H614.3M601.3 857.6H614.3M601.3 863.8000000000001H614.3" stroke="#111" stroke-width="1.2" fill="none"/><path d="M607.8 870V888.8" stroke="#111" stroke-width="1.2" fill="none"/><path d="M604.5 888.8L611.0999999999999 888.8L607.8 897.8Z" fill="#111"/><path d="M519 866H570" stroke="#222" stroke-width="1" stroke-dasharray="3 5"/><rect x="431" y="897.8" width="187" height="19" fill="#e6e6e6" stroke="#111" stroke-width="1.3"/><path d="M448 916.8V925.5" stroke="#111" stroke-width="1.2" fill="none"/><path d="M444.7 925.5L451.3 925.5L448 934.5Z" fill="#111"/><ellipse cx="448" cy="940.5" rx="12.6" ry="6" fill="#fff" stroke="#111" stroke-width="1.2"/><path d="M476.5 916.8V925.5" stroke="#111" stroke-width="1.2" fill="none"/><path d="M473.2 925.5L479.8 925.5L476.5 934.5Z" fill="#111"/><ellipse cx="476.5" cy="940.5" rx="12.6" ry="6" fill="#fff" stroke="#111" stroke-width="1.2"/><path d="M507.3 916.8V925.5" stroke="#111" stroke-width="1.2" fill="none"/><path d="M504.0 925.5L510.6 925.5L507.3 934.5Z" fill="#111"/><ellipse cx="507.3" cy="940.5" rx="12.6" ry="6" fill="#fff" stroke="#111" stroke-width="1.2"/><path d="M582 916.8V925.5" stroke="#111" stroke-width="1.2" fill="none"/><path d="M578.7 925.5L585.3 925.5L582 934.5Z" fill="#111"/><ellipse cx="582" cy="940.5" rx="12.6" ry="6" fill="#fff" stroke="#111" stroke-width="1.2"/><path d="M608.5 916.8V925.5" stroke="#111" stroke-width="1.2" fill="none"/><path d="M605.2 925.5L611.8 925.5L608.5 934.5Z" fill="#111"/><ellipse cx="608.5" cy="940.5" rx="12.6" ry="6" fill="#fff" stroke="#111" stroke-width="1.2"/><path d="M526 940H570" stroke="#222" stroke-width="1" stroke-dasharray="3 5"/><path d="M430.5 954C432 960 436 961 445 961H516C522 961 525 963 527.3 967C529.6 963 533 961 539 961H611C620 961 624 960 625.8 954" stroke="#111" stroke-width="1.2" fill="none"/><path d="M527.5 974.7L590 1010L527.5 1045L465 1010Z" fill="#c9c9c9" stroke="#111" stroke-width="1.5"/><rect x="289.5" y="880" width="42.3" height="58" fill="#5a5a5a" stroke="#111" stroke-width="1.2"/><clipPath id="bc5"><rect x="290" y="881" width="41" height="46"/></clipPath><g clip-path="url(#bc5)"><circle cx="315.5" cy="915.1" r="2.4" fill="#333"/><circle cx="316.7" cy="905.4" r="2.5" fill="#bbb"/><circle cx="316.6" cy="922.4" r="1.0" fill="#444"/><circle cx="325.6" cy="898.5" r="1.0" fill="#bbb"/><circle cx="290.5" cy="891.0" r="1.4" fill="#444"/><circle cx="296.5" cy="917.7" r="1.1" fill="#e0e0e0"/><circle cx="308.2" cy="887.1" r="2.7" fill="#222"/><circle cx="298.6" cy="890.9" r="2.8" fill="#bbb"/><circle cx="301.9" cy="925.2" r="1.9" fill="#333"/><circle cx="315.7" cy="889.4" r="2.7" fill="#bbb"/><circle cx="329.6" cy="922.1" r="1.4" fill="#888"/><circle cx="307.0" cy="924.0" r="1.3" fill="#888"/><circle cx="302.4" cy="908.7" r="0.8" fill="#333"/><circle cx="319.0" cy="884.0" r="1.5" fill="#888"/><circle cx="309.7" cy="895.5" r="1.8" fill="#333"/><circle cx="297.2" cy="892.8" r="2.7" fill="#333"/><circle cx="304.7" cy="899.6" r="1.9" fill="#444"/><circle cx="305.0" cy="907.6" r="0.8" fill="#222"/><circle cx="319.0" cy="909.7" r="2.7" fill="#222"/><circle cx="321.0" cy="923.8" r="2.7" fill="#888"/><circle cx="311.0" cy="922.1" r="1.3" fill="#444"/><circle cx="294.4" cy="915.4" r="2.4" fill="#888"/><circle cx="291.5" cy="924.5" r="1.0" fill="#888"/><circle cx="311.0" cy="897.7" r="1.1" fill="#888"/><circle cx="327.9" cy="906.1" r="1.4" fill="#888"/><circle cx="302.6" cy="917.7" r="2.1" fill="#333"/><circle cx="318.3" cy="926.8" r="1.1" fill="#222"/><circle cx="293.3" cy="908.6" r="2.6" fill="#222"/><circle cx="299.7" cy="908.3" r="2.5" fill="#444"/><circle cx="316.7" cy="887.7" r="2.8" fill="#333"/><circle cx="291.3" cy="903.7" r="2.5" fill="#bbb"/><circle cx="330.2" cy="906.9" r="1.1" fill="#444"/><circle cx="294.4" cy="901.0" r="1.1" fill="#444"/><circle cx="302.1" cy="901.8" r="2.8" fill="#bbb"/><circle cx="330.0" cy="901.9" r="1.8" fill="#333"/><circle cx="303.0" cy="893.6" r="1.7" fill="#bbb"/><circle cx="294.6" cy="918.8" r="1.9" fill="#bbb"/><circle cx="315.7" cy="904.0" r="1.5" fill="#222"/><circle cx="310.2" cy="904.7" r="1.9" fill="#e0e0e0"/><circle cx="304.8" cy="917.2" r="2.3" fill="#333"/><circle cx="314.1" cy="882.6" r="1.4" fill="#e0e0e0"/><circle cx="318.9" cy="893.9" r="1.8" fill="#333"/><circle cx="319.4" cy="925.0" r="1.5" fill="#bbb"/><circle cx="313.8" cy="881.5" r="1.9" fill="#888"/><circle cx="303.4" cy="893.6" r="1.4" fill="#e0e0e0"/><circle cx="316.5" cy="917.7" r="1.5" fill="#333"/><circle cx="304.2" cy="924.1" r="1.6" fill="#bbb"/><circle cx="325.7" cy="912.7" r="2.8" fill="#888"/><circle cx="311.2" cy="905.3" r="1.1" fill="#888"/><circle cx="328.4" cy="903.0" r="2.2" fill="#333"/><circle cx="317.5" cy="900.2" r="2.0" fill="#e0e0e0"/><circle cx="311.2" cy="924.1" r="1.4" fill="#e0e0e0"/><circle cx="321.8" cy="910.3" r="2.2" fill="#222"/><circle cx="298.0" cy="908.0" r="2.0" fill="#bbb"/><circle cx="299.0" cy="912.6" r="2.1" fill="#222"/><circle cx="330.4" cy="926.1" r="1.1" fill="#bbb"/><circle cx="294.5" cy="925.5" r="1.8" fill="#e0e0e0"/><circle cx="291.5" cy="902.4" r="1.6" fill="#e0e0e0"/><circle cx="293.0" cy="890.4" r="2.2" fill="#888"/><circle cx="290.0" cy="899.6" r="1.4" fill="#444"/><circle cx="325.5" cy="912.7" r="1.9" fill="#222"/><circle cx="312.5" cy="894.9" r="1.4" fill="#e0e0e0"/><circle cx="303.9" cy="907.7" r="2.7" fill="#bbb"/><circle cx="307.2" cy="918.4" r="2.1" fill="#888"/><circle cx="309.2" cy="888.2" r="1.6" fill="#444"/><circle cx="329.2" cy="925.5" r="2.0" fill="#888"/><circle cx="323.7" cy="911.4" r="1.6" fill="#888"/><circle cx="313.2" cy="909.3" r="1.1" fill="#333"/><circle cx="325.9" cy="907.0" r="1.7" fill="#bbb"/><circle cx="310.2" cy="903.1" r="2.2" fill="#444"/><circle cx="329.4" cy="923.0" r="2.0" fill="#888"/><circle cx="320.4" cy="894.8" r="1.3" fill="#222"/><circle cx="303.1" cy="926.3" r="1.8" fill="#888"/><circle cx="295.9" cy="882.1" r="2.1" fill="#444"/><circle cx="300.1" cy="882.8" r="1.1" fill="#444"/><circle cx="290.5" cy="905.5" r="1.3" fill="#444"/><circle cx="322.1" cy="892.3" r="1.3" fill="#bbb"/><circle cx="319.6" cy="894.1" r="1.8" fill="#444"/><circle cx="311.2" cy="920.7" r="2.6" fill="#222"/><circle cx="290.7" cy="886.8" r="1.4" fill="#333"/><circle cx="303.8" cy="894.7" r="1.9" fill="#444"/><circle cx="304.3" cy="912.4" r="2.4" fill="#bbb"/><circle cx="291.5" cy="892.6" r="1.7" fill="#222"/><circle cx="326.4" cy="906.1" r="0.8" fill="#444"/><circle cx="314.4" cy="912.7" r="2.7" fill="#333"/><circle cx="309.8" cy="922.9" r="1.6" fill="#444"/><circle cx="318.0" cy="914.1" r="2.6" fill="#444"/><circle cx="324.0" cy="884.0" r="2.5" fill="#333"/><circle cx="321.9" cy="907.8" r="2.1" fill="#444"/><circle cx="327.3" cy="887.6" r="1.8" fill="#e0e0e0"/><circle cx="326.4" cy="925.8" r="1.9" fill="#444"/><circle cx="314.0" cy="918.3" r="0.9" fill="#bbb"/><circle cx="301.0" cy="884.9" r="0.9" fill="#222"/><circle cx="303.7" cy="900.7" r="0.9" fill="#444"/><circle cx="318.8" cy="883.2" r="2.5" fill="#bbb"/><circle cx="315.2" cy="918.9" r="1.0" fill="#bbb"/><circle cx="330.8" cy="913.5" r="1.7" fill="#bbb"/><circle cx="315.0" cy="900.0" r="1.1" fill="#e0e0e0"/><circle cx="298.7" cy="906.6" r="2.1" fill="#333"/><circle cx="293.0" cy="883.6" r="2.0" fill="#333"/></g><rect x="290" y="927" width="41.5" height="10.5" fill="#c8c8c8"/><path d="M310 938.5V951.8" stroke="#111" stroke-width="1.2" fill="none"/><path d="M306.7 951.8L313.3 951.8L310 960.8Z" fill="#111"/><rect x="245.5" y="966.8" width="132" height="15.5" fill="#e6e6e6" stroke="#111" stroke-width="1.3"/><path d="M311.3 982.3V995M307 994.5H315.5" stroke="#111" stroke-width="1.2" fill="none"/><path d="M405.3 1000V863.6L336 867.2" stroke="#111" stroke-width="1.2" fill="none"/><path d="M0 0L-9 -3.3L-9 3.3Z" fill="#111" transform="translate(328.7 867.7) rotate(182.0)"/><g font-family="'Liberation Serif',serif" font-weight="bold" fill="#1a1a1a"><text x="493.8" y="568.2" font-size="10.5" textLength="95.0" lengthAdjust="spacingAndGlyphs">Images to be classified</text><text x="504.7" y="579.4" font-size="10.5" textLength="76.8" lengthAdjust="spacingAndGlyphs">in Compound and</text><text x="493.3" y="590.6" font-size="10.5" textLength="97.6" lengthAdjust="spacingAndGlyphs">Not-Compound classes</text><text x="402.4" y="673.0" font-size="10.5" textLength="28.0" lengthAdjust="spacingAndGlyphs">Size in</text><text x="405.3" y="685.0" font-size="10.5" textLength="21.3" lengthAdjust="spacingAndGlyphs">Pixel</text><text x="315.0" y="671.0" font-size="10.5" textLength="52.3" lengthAdjust="spacingAndGlyphs">&lt; Threshold</text><text x="471.3" y="672.2" font-size="10.5" textLength="52.4" lengthAdjust="spacingAndGlyphs">&gt; Threshold</text><text x="496.2" y="712.6" font-size="10.5" textLength="64.0" lengthAdjust="spacingAndGlyphs">Image splitting</text><text x="499.7" y="724.4" font-size="10.5" textLength="58.4" lengthAdjust="spacingAndGlyphs">in sub-images</text><text x="269.4" y="774.3" font-size="10.5" textLength="76.6" lengthAdjust="spacingAndGlyphs">Image dimensions</text><text x="277.6" y="786.6" font-size="10.5" textLength="61.4" lengthAdjust="spacingAndGlyphs">lower then the</text><text x="288.7" y="799.1" font-size="10.5" textLength="40.9" lengthAdjust="spacingAndGlyphs">threshold</text><text x="329.3" y="848.2" font-size="10.5" textLength="65.8" lengthAdjust="spacingAndGlyphs">Not Compound</text><text x="350.7" y="860.4" font-size="10.5" textLength="26.3" lengthAdjust="spacingAndGlyphs">Image</text><text x="517.2" y="861.4" font-size="10.5" textLength="49.8" lengthAdjust="spacingAndGlyphs">Sub-images</text><text x="471.3" y="911.6" font-size="9" textLength="96.2" lengthAdjust="spacingAndGlyphs">3-class &quot;Classifier Engine&quot;</text><text x="479.8" y="957.4" font-size="9" textLength="93.0" lengthAdjust="spacingAndGlyphs">Sub-images classifications</text><text x="258.6" y="978.6" font-size="9" textLength="96.4" lengthAdjust="spacingAndGlyphs">3-class &quot;Classifier Engine&quot;</text></g></g></defs></svg>
<svg style="left:227px;top:524.7px;overflow:hidden" width="447.2" height="470.3" viewBox="227 524.7 447.2 470.3"><use href="#fig"/></svg>
<svg style="left:850.8px;top:748.2px;overflow:hidden" width="340.77" height="265.80" viewBox="227 524.7 447.2 348.82"><use href="#fig"/></svg>
<div class="a" style="left:970.90px;top:111.95px;font-size:16px;line-height:16px;letter-spacing:0.336px;color:#222;">All Markings</div>
<svg style="left:1160px;top:105px" width="16" height="16" viewBox="0 0 16 16"><circle cx="8" cy="8" r="7" fill="#f25b55" stroke="#d84540" stroke-width=".8"/><path d="M5.3 5.3L10.7 10.7M10.7 5.3L5.3 10.7" stroke="#5a0e0c" stroke-width="1.8"/></svg>
<svg style="left:1180px;top:105px" width="16" height="16" viewBox="0 0 16 16"><circle cx="8" cy="8" r="6.6" fill="#fde7a4" stroke="#e7b53c" stroke-width="1.2"/><path d="M4.6 8h6.8" stroke="#9a6a00" stroke-width="1.8"/></svg>
<div class="b" style="left:833px;top:138px;width:367px;height:1px;background:#d3d3d8;"></div>
<div class="b" style="left:833px;top:139px;width:367px;height:41px;background:#f0f2f6;"></div>
<div class="b" style="left:833px;top:180px;width:367px;height:1px;background:#d0d0d5;"></div>
<div class="b" style="left:843.5px;top:150.7px;width:174px;height:23.7px;background:#f4f4f4;border:1px solid #e4e4e4;border-radius:4px;"></div>
<svg style="left:847.5px;top:156px" width="17" height="15" viewBox="0 0 17 15"><circle cx="6" cy="6" r="5.2" fill="none" stroke="#333" stroke-width="1.2"/><path d="M3.2 6A2.8 2.8 0 0 1 6 3.2" stroke="#333" stroke-width=".9" fill="none"/><path d="M9.6 9.6L15.5 14.2" stroke="#222" stroke-width="2.2"/></svg>
<div class="a" style="left:869.50px;top:155.45px;font-size:14px;line-height:14px;letter-spacing:-0.071px;font-style:italic;color:#555;">Search markings</div>
<div class="a" style="left:1028.70px;top:155.37px;font-size:13.5px;line-height:13.5px;color:#222;">3</div>
<div class="b" style="left:1046.3px;top:150.1px;width:24.9px;height:24.7px;background:#f5f5f5;border:1px solid #9c9c9c;border-radius:4px;"></div>
<div class="b" style="left:1081.3px;top:150.1px;width:24.9px;height:24.7px;background:#f5f5f5;border:1px solid #9c9c9c;border-radius:4px;"></div>
<svg style="left:1052px;top:154.5px" width="13" height="15" viewBox="0 0 13 15"><path d="M0 1.8H13" stroke="#2e2e2e" stroke-width="1.7"/><path d="M4.5 1C5 .2 8 .2 8.5 1" stroke="#2e2e2e" stroke-width="1.4" fill="none"/><path d="M1 3.6H12L11 13.8Q10.8 14.8 9.8 14.8H3.2Q2.2 14.8 2 13.8Z" fill="#2e2e2e"/><path d="M5.3 5.5V12.2M7.7 5.5V12.2" stroke="#f5f5f5" stroke-width="1.1"/></svg>
<svg style="left:1089px;top:155px" width="14" height="15" viewBox="0 0 14 15"><path d="M7.6 4V1H.9V14H7.6V11" stroke="#2e2e2e" stroke-width="1.8" fill="none"/><path d="M4 7.5H10.5" stroke="#2e2e2e" stroke-width="1.3"/><path d="M10 4.5L13.3 7.5L10 10.5Z" fill="#2e2e2e"/></svg>
<div class="b" style="left:1199.2px;top:60px;width:1.5px;height:954px;background:#dadada;"></div>
<div class="b" style="left:833.5px;top:182px;width:7.5px;height:241px;background:#f9bfa5;"></div>
<div class="b" style="left:833px;top:423px;width:366px;height:1px;background:#d2d2d2;"></div>
<div class="b" style="left:833.5px;top:424px;width:7.5px;height:260px;background:#d4b3f7;"></div>
<div class="b" style="left:833px;top:684px;width:366px;height:1px;background:#d2d2d2;"></div>
<div class="b" style="left:833.5px;top:685px;width:7.5px;height:329px;background:#aeee98;"></div>
<div class="b" style="left:833px;top:1014px;width:366px;height:1px;background:#d2d2d2;"></div>
<div class="b" style="left:846.2px;top:191.8px;width:96.7px;height:19.8px;background:#f9bfa5;border:1px solid #e4a68b;border-radius:3px;"></div>
<div class="a" style="left:854.50px;top:194.57px;font-size:13.5px;line-height:13.5px;letter-spacing:1.050px;color:#1a1a1a;-webkit-text-stroke:.45px #1a1a1a;">Motivations</div>
<div class="a" style="left:948.00px;top:194.15px;font-size:14px;line-height:14px;letter-spacing:0.081px;color:#222;text-decoration:underline;text-underline-offset:2px;">HIGHLIGHT – Pg. 1</div>
<div class="a" style="left:846.80px;top:218.65px;font-size:14px;line-height:14px;letter-spacing:0.578px;color:#b0b0b0;">paper1.pdf</div>
<div class="a" style="left:852.00px;top:246.75px;font-size:14px;line-height:14px;letter-spacing:0.409px;color:#2a2a2a;">Recognizing the class to which a processed image</div>
<div class="a" style="left:852.00px;top:264.75px;font-size:14px;line-height:14px;letter-spacing:0.618px;color:#2a2a2a;">is likely to belong would allow the Color</div>
<div class="a" style="left:852.00px;top:282.75px;font-size:14px;line-height:14px;letter-spacing:0.470px;color:#2a2a2a;">Management System to process the image</div>
<div class="a" style="left:852.00px;top:300.75px;font-size:14px;line-height:14px;letter-spacing:0.514px;color:#2a2a2a;">according to speci!c strategies for text, graphics</div>
<div class="a" style="left:852.00px;top:318.75px;font-size:14px;line-height:14px;letter-spacing:0.623px;color:#2a2a2a;">and photo’s images, to automatically perform</div>
<div class="a" style="left:852.00px;top:336.75px;font-size:14px;line-height:14px;letter-spacing:0.650px;color:#2a2a2a;">color adjustments, or to obtain a more pleasant</div>
<div class="a" style="left:852.00px;top:354.75px;font-size:14px;line-height:14px;letter-spacing:0.730px;color:#2a2a2a;">(or preferred) color reproduction without</div>
<div class="a" style="left:852.00px;top:372.75px;font-size:14px;line-height:14px;letter-spacing:0.654px;color:#2a2a2a;">requiring user interaction.</div>
<svg style="left:851.7px;top:399px" width="15" height="15.5" viewBox="0 0 15 15.5"><path d="M7 .3H13.5V6.5L7.3 12.7L1 6.4Z" fill="#999"/><path d="M6.3 2.5H14.5V9L7.5 15.5L.3 8.3Z" fill="#999"/><path d="M.8 6.5L6.6 .7" stroke="#fff" stroke-width=".9"/><circle cx="12" cy="4.6" r=".9" fill="#fff"/></svg>
<svg style="left:878.4px;top:400.4px" width="13" height="13" viewBox="0 0 13 13"><path d="M1.5 9.3L9.3 1.5L11.5 3.7L3.7 11.5Z" fill="#9a9a9a"/><path d="M10 .8L11 -.2L13.2 2L12.2 3Z" fill="#9a9a9a"/><path d="M1.3 9.7L3.3 11.7L0 13Z" fill="#9a9a9a"/></svg>
<svg style="left:904.1px;top:400.8px" width="14.2" height="13.2" viewBox="0 0 14.2 13.2"><path d="M1.2 0H13A1.2 1.2 0 0 1 14.2 1.2V13.2L11.5 10.2H1.2A1.2 1.2 0 0 1 0 9V1.2A1.2 1.2 0 0 1 1.2 0Z" fill="#999"/><path d="M3.6 2.8H10.6M3.6 5.2H10.6M3.6 7.6H10.6" stroke="#fff" stroke-width="1.1"/></svg>
<svg style="left:928.8px;top:400.4px" width="15.5" height="13" viewBox="0 0 15.5 13"><path d="M9 0L15.5 4.6L9 9.6V6.6C5 6.6 2 8 0 13C.6 7.2 3.5 3.6 9 3.2Z" fill="#9a9a9a"/></svg>
<div class="b" style="left:846.25px;top:434.5px;width:172.25px;height:19.75px;background:#d4b3f7;border:1px solid #b892e6;border-radius:3px;"></div>
<div class="a" style="left:853.75px;top:437.37px;font-size:13.5px;line-height:13.5px;letter-spacing:1.036px;color:#1a1a1a;-webkit-text-stroke:.45px #1a1a1a;">Classification Strategy</div>
<div class="a" style="left:1024.25px;top:436.95px;font-size:14px;line-height:14px;letter-spacing:0.081px;color:#222;text-decoration:underline;text-underline-offset:2px;">HIGHLIGHT – Pg. 5</div>
<div class="a" style="left:846.80px;top:461.45px;font-size:14px;line-height:14px;letter-spacing:0.578px;color:#b0b0b0;">paper1.pdf</div>
<div class="a" style="left:852.00px;top:489.55px;font-size:14px;line-height:14px;letter-spacing:0.542px;color:#2a2a2a;">The more straightforward way to address a classi!</div>
<div class="a" style="left:852.00px;top:507.55px;font-size:14px;line-height:14px;letter-spacing:0.601px;color:#2a2a2a;">cation problem with four classes would have been</div>
<div class="a" style="left:852.00px;top:525.55px;font-size:14px;line-height:14px;letter-spacing:0.510px;color:#2a2a2a;">to use a four-class classi!er. However, the great</div>
<div class="a" style="left:852.00px;top:543.55px;font-size:14px;line-height:14px;letter-spacing:0.588px;color:#2a2a2a;">variety and complexity of compound images</div>
<div class="a" style="left:853.00px;top:561.55px;font-size:14px;line-height:14px;letter-spacing:0.619px;color:#2a2a2a;">would have required the de!nition of a huge</div>
<div class="a" style="left:852.00px;top:579.55px;font-size:14px;line-height:14px;letter-spacing:0.653px;color:#2a2a2a;">training set without guaranteeing its</div>
<div class="a" style="left:852.00px;top:597.55px;font-size:14px;line-height:14px;letter-spacing:0.477px;color:#2a2a2a;">completeness. Consequently, we discarded this</div>
<div class="a" style="left:852.00px;top:615.55px;font-size:14px;line-height:14px;letter-spacing:0.522px;color:#2a2a2a;">approach and de!ned the classi!cation strategy</div>
<div class="a" style="left:852.00px;top:633.55px;font-size:14px;line-height:14px;letter-spacing:0.493px;color:#2a2a2a;">described below and shown in Fig. 4.</div>
<svg style="left:851.7px;top:659.6px" width="15" height="15.5" viewBox="0 0 15 15.5"><path d="M7 .3H13.5V6.5L7.3 12.7L1 6.4Z" fill="#2a2a2a"/><path d="M6.3 2.5H14.5V9L7.5 15.5L.3 8.3Z" fill="#2a2a2a"/><path d="M.8 6.5L6.6 .7" stroke="#fff" stroke-width=".9"/><circle cx="12" cy="4.6" r=".9" fill="#fff"/></svg>
<svg style="left:878.4px;top:661.0px" width="13" height="13" viewBox="0 0 13 13"><path d="M1.5 9.3L9.3 1.5L11.5 3.7L3.7 11.5Z" fill="#9a9a9a"/><path d="M10 .8L11 -.2L13.2 2L12.2 3Z" fill="#9a9a9a"/><path d="M1.3 9.7L3.3 11.7L0 13Z" fill="#9a9a9a"/></svg>
<svg style="left:904.1px;top:661.4px" width="14.2" height="13.2" viewBox="0 0 14.2 13.2"><path d="M1.2 0H13A1.2 1.2 0 0 1 14.2 1.2V13.2L11.5 10.2H1.2A1.2 1.2 0 0 1 0 9V1.2A1.2 1.2 0 0 1 1.2 0Z" fill="#3a3a3a"/><path d="M3.6 2.8H10.6M3.6 5.2H10.6M3.6 7.6H10.6" stroke="#fff" stroke-width="1.1"/></svg>
<svg style="left:928.8px;top:661.0px" width="15.5" height="13" viewBox="0 0 15.5 13"><path d="M9 0L15.5 4.6L9 9.6V6.6C5 6.6 2 8 0 13C.6 7.2 3.5 3.6 9 3.2Z" fill="#9a9a9a"/></svg>
<div class="a" style="left:955.50px;top:659.97px;font-size:13.5px;line-height:13.5px;letter-spacing:0.500px;color:#222;">(1 tag)</div>
<div class="b" style="left:846.1px;top:695.8px;width:185.9px;height:19.8px;background:#aeee98;border:1px solid #8fd27a;border-radius:3px;"></div>
<div class="a" style="left:854.30px;top:698.57px;font-size:13.5px;line-height:13.5px;letter-spacing:1.105px;color:#1a1a1a;-webkit-text-stroke:.45px #1a1a1a;">Document Classification</div>
<div class="a" style="left:1038.20px;top:698.15px;font-size:14px;line-height:14px;letter-spacing:0.017px;color:#222;text-decoration:underline;text-underline-offset:2px;">IMAGE – Pg. 5</div>
<div class="a" style="left:846.80px;top:722.75px;font-size:14px;line-height:14px;letter-spacing:0.578px;color:#b0b0b0;">paper1.pdf</div>
<div class="a" style="left:1280.90px;top:72.01px;font-size:17px;line-height:17px;letter-spacing:0.575px;color:#222;">Outline Inspector</div>
<div class="b" style="left:1216.5px;top:115.5px;width:269px;height:238.89999999999998px;background:#f8f9fd;border:1px solid #e1e3e9;border-radius:5px;"></div>
<div class="a" style="left:1226.30px;top:126.33px;font-size:16.5px;line-height:16.5px;letter-spacing:0.093px;color:#222;">Outline Details</div>
<div class="a" style="left:1226.30px;top:160.99px;font-size:11px;line-height:11px;letter-spacing:-0.150px;color:#222;">TITLE</div>
<div class="b" style="left:1261px;top:153px;width:214.5999999999999px;height:24.599999999999994px;background:#f1f1f1;border:1px solid #e0e0e0;border-radius:4px;"></div>
<div class="a" style="left:1266.70px;top:158.57px;font-size:13.5px;line-height:13.5px;letter-spacing:0.631px;color:#222;">Classification in Documents</div>
<div class="a" style="left:1226.80px;top:194.61px;font-size:19px;line-height:19px;color:#222;">7</div>
<div class="a" style="left:1293.90px;top:194.61px;font-size:19px;line-height:19px;letter-spacing:0.450px;color:#222;">153</div>
<div class="a" style="left:1369.80px;top:194.61px;font-size:19px;line-height:19px;letter-spacing:1.267px;color:#222;">1025</div>
<div class="a" style="left:1226.30px;top:222.96px;font-size:11.5px;line-height:11.5px;letter-spacing:-0.267px;color:#555;">ROWS</div>
<div class="a" style="left:1292.50px;top:222.96px;font-size:11.5px;line-height:11.5px;letter-spacing:0.400px;color:#555;">WORDS</div>
<div class="a" style="left:1369.00px;top:222.96px;font-size:11.5px;line-height:11.5px;letter-spacing:0.433px;color:#555;">CHARACTERS</div>
<div class="a" style="left:1226.30px;top:252.51px;font-size:19px;line-height:19px;letter-spacing:0.830px;color:#222;">Readability</div>
<svg style="left:1338.5px;top:250.6px" width="22" height="22" viewBox="0 0 22 22"><circle cx="10.7" cy="10.7" r="9.6" fill="none" stroke="#666" stroke-width="1.6"/><path d="M7.6 8.3C7.6 6.3 9 5.3 10.8 5.3C12.7 5.3 14 6.4 14 8.1C14 10.2 11.4 10.5 11.2 12.6V13.1" stroke="#666" stroke-width="1.9" fill="none"/><circle cx="11.1" cy="15.9" r="1.2" fill="#666"/></svg>
<div class="a" style="left:1226.30px;top:281.46px;font-size:11.5px;line-height:11.5px;letter-spacing:0.450px;color:#555;">GRADE</div>
<div class="a" style="left:1280.50px;top:279.77px;font-size:13.5px;line-height:13.5px;letter-spacing:0.686px;color:#222;">12 to 13</div>
<div class="b" style="left:1273.1px;top:309px;width:154.8px;height:35.9px;background:#2196f3;border-radius:2px;box-shadow:0 1px 3px rgba(0,0,0,.25);"></div>
<div class="a" style="left:1289.60px;top:320.55px;font-size:14px;line-height:14px;letter-spacing:-0.008px;color:#fff;">EXPORT OUTLINE</div>
<div class="b" style="left:1216.5px;top:370.9px;width:269px;height:155.20000000000005px;background:#f8f9fd;border:1px solid #e1e3e9;border-radius:5px;"></div>
<svg style="left:1227.1px;top:385.3px" width="14" height="7.4" viewBox="0 0 14 7.4"><path d="M0 0H14L7 7.4Z" fill="#2a2a2a"/></svg>
<div class="a" style="left:1252.60px;top:381.25px;font-size:16px;line-height:16px;letter-spacing:0.093px;color:#222;">Cited Documents</div>
<div class="a" style="left:1226.20px;top:409.64px;font-size:12px;line-height:12px;letter-spacing:0.238px;color:#555;">OUTLINE REFERENCES (1)</div>
<div class="b" style="left:1217px;top:431.5px;width:268px;height:1.2px;background:#c9cacf;"></div>
<div class="b" style="left:1217px;top:432.5px;width:268px;height:82.5px;background:#e1e2e8;"></div>
<div class="b" style="left:1217px;top:514.8px;width:268px;height:1px;background:#c9cacf;"></div>
<div class="b" style="left:1217px;top:432px;width:268px;height:83px;overflow:hidden"><div class="a" style="left:9.20px;top:10.57px;font-size:13.5px;line-height:13.5px;letter-spacing:0.180px;color:#1e1e1e;text-shadow:0.3px 0 0 #1e1e1e;">A hierarchical classi!cation strategy for digital documents</div>
</div>
<div class="a" style="left:1226.50px;top:462.99px;font-size:13px;line-height:13px;letter-spacing:0.933px;color:#555;">/Users/leapian/Documents/Zenreader</div>
<div class="a" style="left:1226.20px;top:477.69px;font-size:13px;line-height:13px;letter-spacing:0.682px;color:#555;">Projects/AwesomeResearchProject/pa</div>
<div class="a" style="left:1226.20px;top:492.59px;font-size:13px;line-height:13px;letter-spacing:1.057px;color:#555;">per1.pdf</div>
<div class="b" style="left:1216.5px;top:542.7px;width:269px;height:396.5999999999999px;background:#f8f9fd;border:1px solid #e1e3e9;border-radius:5px;"></div>
<svg style="left:1227.1px;top:557.1px" width="14" height="7.4" viewBox="0 0 14 7.4"><path d="M0 0H14L7 7.4Z" fill="#2a2a2a"/></svg>
<div class="a" style="left:1252.60px;top:553.45px;font-size:16px;line-height:16px;letter-spacing:0.275px;color:#222;">Document Metadata</div>
<div class="a" style="left:1226.20px;top:596.39px;font-size:13px;line-height:13px;letter-spacing:-0.067px;font-weight:bold;color:#111;">Type</div>
<div class="b" style="left:1266.1px;top:590.4px;width:209.70000000000005px;height:23.899999999999977px;background:#f1f1f1;border:1px solid #e0e0e0;border-radius:4px;"></div>
<div class="a" style="left:1271.10px;top:595.47px;font-size:13.5px;line-height:13.5px;letter-spacing:0.471px;color:#222;">Article Journal</div>
<svg style="left:1459px;top:597.9px" width="11.7" height="8.1" viewBox="0 0 12 8"><path d="M0 0H12L6 8Z" fill="#2a2a2a"/></svg>
<div class="a" style="left:1226.20px;top:625.19px;font-size:13px;line-height:13px;letter-spacing:0.720px;font-weight:bold;color:#111;">Title*</div>
<div class="b" style="left:1226.2px;top:649.3px;width:249.5999999999999px;height:36.90000000000009px;background:#f1f1f1;border:1px solid #e0e0e0;border-radius:4px;"></div>
<div class="a" style="left:1230.10px;top:653.17px;font-size:13.5px;line-height:13.5px;letter-spacing:0.675px;color:#222;">A hierarchical classi!cation strategy</div>
<div class="a" style="left:1230.10px;top:668.27px;font-size:13.5px;line-height:13.5px;letter-spacing:0.790px;color:#222;">for digital documents</div>
<div class="a" style="left:1226.40px;top:697.19px;font-size:13px;line-height:13px;letter-spacing:-0.067px;font-weight:bold;color:#111;">Authors</div>
<div class="b" style="left:1226.4px;top:721.2px;width:249.39999999999986px;height:22.399999999999977px;background:#f1f1f1;border:1px solid #e0e0e0;border-radius:4px;"></div>
<div class="a" style="left:1230.40px;top:725.87px;font-size:13.5px;line-height:13.5px;letter-spacing:0.484px;color:#222;">R. Schettini, C. Brambilla</div>
<div class="a" style="left:1226.40px;top:759.29px;font-size:13px;line-height:13px;letter-spacing:0.125px;font-weight:bold;color:#111;">Year*</div>
<div class="b" style="left:1271.3px;top:754.5px;width:204.5px;height:21.799999999999955px;background:#f1f1f1;border:1px solid #e0e0e0;border-radius:4px;"></div>
<div class="a" style="left:1275.40px;top:758.87px;font-size:13.5px;line-height:13.5px;letter-spacing:0.133px;color:#222;">2002</div>
<div class="a" style="left:1226.40px;top:792.59px;font-size:13px;line-height:13px;letter-spacing:-0.525px;font-weight:bold;color:#111;">Pages</div>
<div class="b" style="left:1273.5px;top:787.2px;width:202.29999999999995px;height:22.399999999999977px;background:#f1f1f1;border:1px solid #e0e0e0;border-radius:4px;"></div>
<div class="a" style="left:1226.40px;top:825.29px;font-size:13px;line-height:13px;letter-spacing:-0.050px;font-weight:bold;color:#111;">Publisher</div>
<div class="b" style="left:1295.9px;top:820.5px;width:179.89999999999986px;height:22.100000000000023px;background:#f1f1f1;border:1px solid #e0e0e0;border-radius:4px;"></div>
<div class="a" style="left:1300.50px;top:824.87px;font-size:13.5px;line-height:13.5px;letter-spacing:0.519px;color:#222;">Pattern Recognition 35</div>
<div class="a" style="left:1226.40px;top:853.09px;font-size:13px;line-height:13px;letter-spacing:0.257px;font-weight:bold;color:#111;">Citation</div>
<svg style="left:1464.9px;top:854px" width="7.6" height="12.8" viewBox="0 0 7.6 12.8"><path d="M0 0V12.8L7.6 6.4Z" fill="#2a2a2a"/></svg>
<div class="a" style="left:1226.40px;top:897.49px;font-size:13px;line-height:13px;letter-spacing:-0.171px;font-weight:bold;color:#111;">Cite Key</div>
<div class="b" style="left:1289px;top:877.7px;width:186.79999999999995px;height:51.299999999999955px;background:#f1f1f1;border:1px solid #e0e0e0;border-radius:4px;"></div>
<div class="a" style="left:1292.30px;top:880.77px;font-size:13.5px;line-height:13.5px;letter-spacing:1.011px;color:#222;">{2d200344-</div>
<div class="a" style="left:1292.30px;top:895.57px;font-size:13.5px;line-height:13.5px;letter-spacing:1.386px;color:#222;">f955-45a4-8740-</div>
<div class="a" style="left:1292.30px;top:910.77px;font-size:13.5px;line-height:13.5px;letter-spacing:0.683px;color:#222;">cf1c73b55e53}</div>
<div class="b" style="left:1216.5px;top:955.4px;width:269px;height:74.60000000000002px;background:#f8f9fd;border:1px solid #e1e3e9;border-radius:5px;"></div>
<svg style="left:1226.9px;top:970px" width="14" height="7.4" viewBox="0 0 14 7.4"><path d="M0 0H14L7 7.4Z" fill="#2a2a2a"/></svg>
<div class="a" style="left:1252.30px;top:966.15px;font-size:16px;line-height:16px;letter-spacing:0.207px;color:#222;">Project Details</div>
<div class="a" style="left:1226.30px;top:998.59px;font-size:13px;line-height:13px;letter-spacing:0.160px;color:#222;">Title:</div>
<div class="b" style="left:1260.7px;top:993.3px;width:215.0px;height:36.700000000000045px;background:#f1f1f1;border:1px solid #e0e0e0;border-radius:4px;"></div>
<div class="a" style="left:1265.70px;top:998.17px;font-size:13.5px;line-height:13.5px;letter-spacing:0.200px;color:#222;">AwesomeResearchProject</div>
<div class="b" style="left:56px;top:1014px;width:1445px;height:30px;background:#2c3033;border-top:1px solid #1c1f22;"></div>
<div class="a" style="left:66.40px;top:1023.05px;font-size:14px;line-height:14px;letter-spacing:0.868px;color:#e2e2e2;">09:56:40 – Highlight created.</div>
<div class="b" style="left:1331px;top:1024px;width:12px;height:12px;background:#28c840;border-radius:50%;"></div>
<svg style="left:1354.3px;top:1023px" width="13" height="13" viewBox="0 0 13 13"><circle cx="6.5" cy="3.4" r="3.2" fill="#e6e6e6"/><path d="M0 12.8C0 9 2.5 7.6 6.5 7.6C10.5 7.6 13 9 13 12.8Z" fill="#e6e6e6"/></svg>
<div class="a" style="left:1379.00px;top:1022.65px;font-size:14px;line-height:14px;letter-spacing:0.250px;color:#e2e2e2;text-decoration:underline;text-underline-offset:2px;">Service</div>
<div class="a" style="left:1442.50px;top:1022.65px;font-size:14px;line-height:14px;letter-spacing:0.840px;color:#e2e2e2;">v2.0.1</div>
</div></div>
</body></html>
